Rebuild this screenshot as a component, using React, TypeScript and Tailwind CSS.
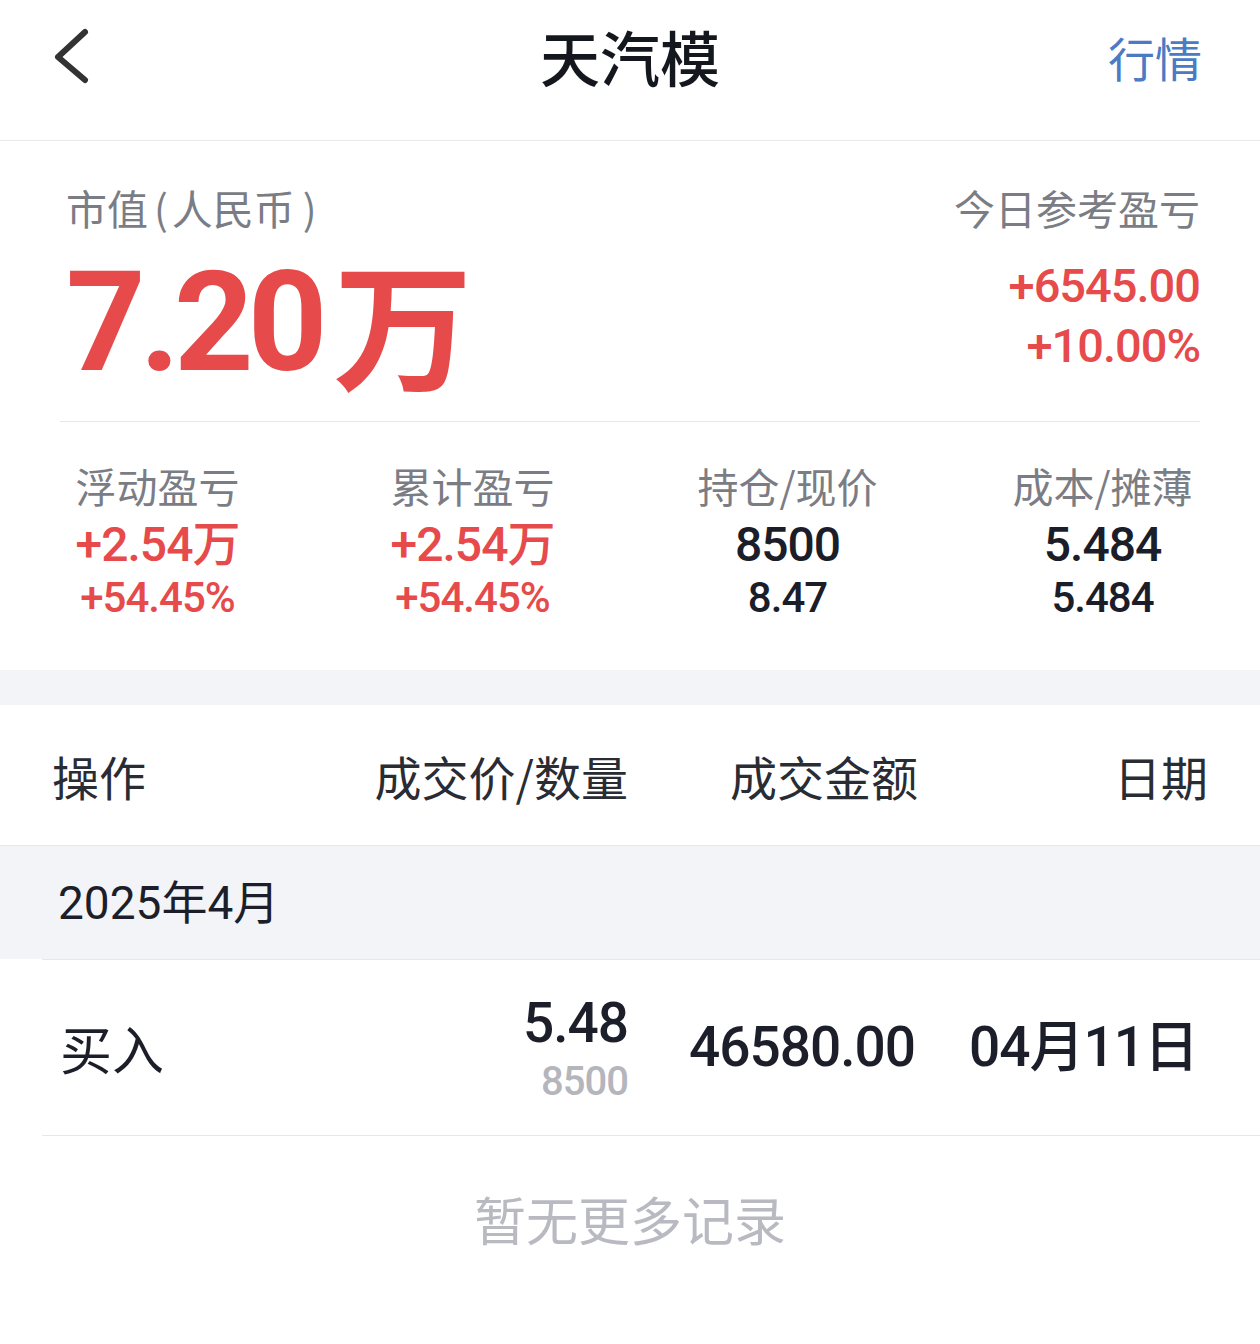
export default function App() {
  const num = "font-['Roboto','Noto_Sans_CJK_SC',sans-serif]";
  return (
    <div className="w-[1260px] h-[1344px] bg-white font-['Noto_Sans_CJK_SC',sans-serif] overflow-hidden">
      {/* header */}
      <div className="h-[141px] border-b border-[#e9e9ec] grid grid-cols-[1fr_auto_1fr] items-center pb-[28px]">
        <div className="pl-[52px] flex items-center">
          <svg width="44" height="64" viewBox="0 0 44 64" fill="none">
            <polyline points="33,8 6,33 33,56" stroke="#333333" strokeWidth="6" strokeLinecap="round" strokeLinejoin="round" />
          </svg>
        </div>
        <div className="text-[60px] font-medium text-[#15171f] leading-none">天汽模</div>
        <div className="text-right pr-[58px] text-[47px] text-[#4a7bc3] leading-none">行情</div>
      </div>

      {/* market value */}
      <div className="px-[60px] pt-[41px]">
        <div className="flex justify-between h-[50px] items-center text-[41px] text-[#7b7d85] leading-none">
          <span className="pl-[6px] flex items-center">
            市值<span className="ml-[6px] mr-[4px]">(</span>人民币<span className="ml-[8px]">)</span>
          </span>
          <span>今日参考盈亏</span>
        </div>
        <div className="flex justify-between items-start mt-[20px]">
          <div className="h-[140px] flex items-center pl-[6px] font-bold text-[139px] text-[#e64a4a] leading-none">
            <span className={num + " tracking-[-6px]"}>7.20</span>
            <span className="ml-[12px] -mt-[6px]">万</span>
          </div>
          <div className={num + " pt-[3px] text-right text-[#e64a4a] font-medium text-[47px] tracking-[-1px] leading-none"}>
            <div className="h-[60px] flex items-center justify-end">+6545.00</div>
            <div className="h-[60px] flex items-center justify-end">+10.00%</div>
          </div>
        </div>
        <div className="mt-[29px] h-px bg-[#e6e7ea]" />
      </div>

      {/* stats */}
      <div className="grid grid-cols-4 pt-[38px] pb-[47px]">
        {[
          { label: "浮动盈亏", v: "+2.54万", s: "+54.45%", red: true },
          { label: "累计盈亏", v: "+2.54万", s: "+54.45%", red: true },
          { label: "持仓/现价", v: "8500", s: "8.47", red: false },
          { label: "成本/摊薄", v: "5.484", s: "5.484", red: false },
        ].map((c, i) => (
          <div key={i} className="flex flex-col items-center">
            <div className="h-[50px] flex items-center text-[41px] text-[#7b7d85] leading-none">{c.label}</div>
            <div
              className={
                num +
                " mt-[7px] h-[56px] flex items-center text-[48px] font-medium tracking-[-1px] leading-none " +
                (c.red ? "text-[#e64a4a]" : "text-[#1b1d29]")
              }
            >
              {c.v}
            </div>
            <div
              className={
                num +
                " h-[50px] flex items-center text-[42px] font-medium tracking-[-1px] leading-none " +
                (c.red ? "text-[#e64a4a]" : "text-[#1b1d29]")
              }
            >
              {c.s}
            </div>
          </div>
        ))}
      </div>

      {/* gap band */}
      <div className="h-[35px] bg-[#f3f4f7]" />

      {/* table header */}
      <div className="h-[141px] border-b border-[#e6e7ea] flex items-center pl-[52px] pr-[52px] text-[47px] text-[#2a2c34] leading-none">
        <div className="flex-1">操作</div>
        <div className="w-[300px] text-right">成交价/数量</div>
        <div className="w-[290px] text-right">成交金额</div>
        <div className="w-[290px] text-right">日期</div>
      </div>

      {/* month */}
      <div className={num + " h-[113px] bg-[#f3f4f7] flex items-center pl-[58px] text-[46px] text-[#1c1e2a] leading-none"}>
        2025年4月
      </div>

      {/* trade row */}
      <div className="ml-[42px] h-[177px] border-t border-b border-[#e6e7ea] flex items-center pl-[18px] pr-[62px] text-[#1c1e2a] leading-none">
        <div className="flex-1 text-[52px]">买入</div>
        <div className={num + " w-[300px] flex flex-col items-end font-medium"}>
          <div className="h-[60px] flex items-center text-[55px] tracking-[-1px]">5.48</div>
          <div className="mt-[9px] h-[40px] flex items-center text-[40px] tracking-[-1px] text-[#b4b5bd]">8500</div>
        </div>
        <div className={num + " w-[287px] text-right text-[55px] font-medium tracking-[-1px]"}>46580.00</div>
        <div className={num + " w-[283px] text-right text-[55px] font-medium tracking-[-1px]"}>04月11日</div>
      </div>

      {/* footer */}
      <div className="mt-[53px] h-[60px] flex items-center justify-center text-[52px] text-[#b9bac1] leading-none">
        暂无更多记录
      </div>
    </div>
  );
}
